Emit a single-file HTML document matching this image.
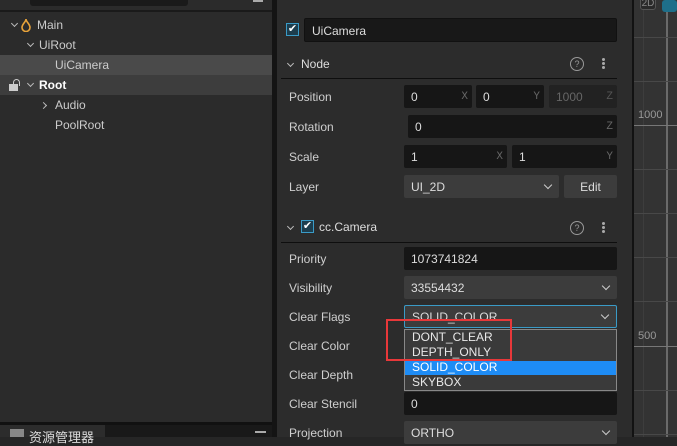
<!DOCTYPE html>
<html><head><meta charset="utf-8"><style>
*{margin:0;padding:0;box-sizing:border-box}
body{width:677px;height:437px;overflow:hidden;background:#262626;font-family:"Liberation Sans","Noto Sans CJK SC",sans-serif;font-size:12px;color:#ccc;position:relative}
.a{position:absolute}
.lbl{position:absolute;left:289px;color:#cfcfcf}
.inp{position:absolute;background:#161616;border-radius:2px;height:23px;line-height:24px;padding-left:7px;color:#ddd}
.sel{position:absolute;background:#3c3c3c;border-radius:2px;height:23px;line-height:24px;padding-left:7px;color:#ddd}
.ax{position:absolute;right:4px;top:0;font-family:"Liberation Mono",monospace;font-size:11px;color:#666}
.chev{position:absolute;right:8px;top:7px;width:6px;height:6px;border-right:1.5px solid #ccc;border-bottom:1.5px solid #ccc;transform:rotate(45deg)}
.tc{position:absolute;width:5px;height:5px;border-right:1.5px solid #bbb;border-bottom:1.5px solid #bbb;transform:rotate(45deg)}
.tr{position:absolute;width:5px;height:5px;border-right:1.5px solid #bbb;border-bottom:1.5px solid #bbb;transform:rotate(-45deg)}
.tree{position:absolute;left:0;width:272px;height:20px;line-height:20px}
.hl{position:absolute;height:1px;background:#111}
.vl{position:absolute;width:1px;background:#3d3d3d}
</style></head><body>
<div class="a" style="left:0;top:0;width:272px;height:422px;background:#2b2b2b"></div>
<div class="a" style="left:0;top:10px;width:272px;height:2px;background:#1a1a1a"></div>
<div class="a" style="left:30px;top:0;width:158px;height:6px;background:#1a1a1a;border-radius:0 0 3px 3px"></div>
<div class="a" style="left:253px;top:0;width:10px;height:2px;background:#aaa"></div>
<div class="tree" style="top:15px"><span class="tc" style="left:12px;top:6px"></span>
<svg class="a" style="left:21px;top:3px" width="10" height="14" viewBox="0 0 10 14"><path d="M5 1 C5 4 1 6 1 9.5 A4 4 0 0 0 9 9.5 C9 6 5 4 5 1Z" fill="none" stroke="#e8a33a" stroke-width="1.6"/></svg>
<span class="a" style="left:37px;color:#ccc">Main</span></div>
<div class="tree" style="top:35px"><span class="tc" style="left:28px;top:6px"></span><span class="a" style="left:39px;color:#ccc">UiRoot</span></div>
<div class="tree" style="top:55px;background:#4a4a4a"><span class="a" style="left:55px;color:#ccc">UiCamera</span></div>
<div class="tree" style="top:75px;background:#3d3d3d"><span class="a" style="left:9px;top:9px;width:9px;height:7px;background:#ccc"></span><span class="a" style="left:13px;top:4px;width:7px;height:7px;border:1.5px solid #ccc;border-bottom:none;border-radius:4px 4px 0 0"></span><span class="tc" style="left:28px;top:6px"></span><span class="a" style="left:39px;color:#fff;font-weight:bold">Root</span></div>
<div class="tree" style="top:95px"><span class="tr" style="left:41px;top:8px"></span><span class="a" style="left:55px;color:#ccc">Audio</span></div>
<div class="tree" style="top:115px"><span class="a" style="left:55px;color:#ccc">PoolRoot</span></div>
<div class="a" style="left:0;top:422px;width:272px;height:3px;background:#111"></div>
<div class="a" style="left:0;top:425px;width:105px;height:12px;background:#2c2c2c"></div>
<div class="a" style="left:105px;top:425px;width:167px;height:12px;background:#191919"></div>
<div class="a" style="left:10px;top:429px;width:14px;height:8px;background:#888"></div>
<div class="a" style="left:29px;top:427px;color:#ddd;font-size:13px">资源管理器</div>
<div class="a" style="left:255px;top:431px;width:11px;height:2px;background:#aaa"></div>
<div class="a" style="left:272px;top:0;width:5px;height:437px;background:#141414"></div>
<div class="a" style="left:277px;top:0;width:355px;height:437px;background:#2c2c2c"></div>
<div class="a" style="left:286px;top:23px;width:13px;height:13px;border:1px solid #3a9bc7;background:#1d3d4d;color:#fff;font-size:11px;line-height:11px;text-align:center">✔</div>
<div class="inp" style="left:304px;top:18px;width:313px;height:24px;line-height:24px;background:#181818;border:1px solid #111">UiCamera</div>
<span class="tc" style="left:288px;top:61px"></span>
<div class="a" style="left:301px;top:57px;color:#ddd">Node</div>
<div class="a" style="left:570px;top:57px;width:14px;height:14px;border:1px solid #999;border-radius:50%;font-size:9px;line-height:12px;text-align:center;color:#999">?</div>
<div class="a" style="left:602px;top:58px;width:3px;height:3px;background:#aaa;border-radius:50%;box-shadow:0 4px 0 #aaa,0 8px 0 #aaa"></div>
<div class="hl" style="left:281px;top:78px;width:336px;background:#0e0e0e"></div>
<div class="lbl" style="top:90px">Position</div>
<div class="inp" style="left:404px;top:85px;width:68px">0<span class="ax">X</span></div>
<div class="inp" style="left:476px;top:85px;width:68px">0<span class="ax">Y</span></div>
<div class="inp" style="left:549px;top:85px;width:68px;background:#222;color:#666">1000<span class="ax" style="color:#555">Z</span></div>
<div class="lbl" style="top:120px">Rotation</div>
<div class="inp" style="left:408px;top:115px;width:209px">0<span class="ax">Z</span></div>
<div class="lbl" style="top:150px">Scale</div>
<div class="inp" style="left:404px;top:145px;width:103px">1<span class="ax">X</span></div>
<div class="inp" style="left:512px;top:145px;width:105px">1<span class="ax">Y</span></div>
<div class="lbl" style="top:180px">Layer</div>
<div class="sel" style="left:404px;top:175px;width:155px">UI_2D<span class="chev"></span></div>
<div class="sel" style="left:564px;top:175px;width:53px;padding:0;text-align:center">Edit</div>
<span class="tc" style="left:288px;top:224px"></span>
<div class="a" style="left:301px;top:220px;width:13px;height:13px;border:1px solid #3a9bc7;background:#1d3d4d;color:#fff;font-size:11px;line-height:11px;text-align:center">✔</div>
<div class="a" style="left:319px;top:220px;color:#ddd">cc.Camera</div>
<div class="a" style="left:570px;top:221px;width:14px;height:14px;border:1px solid #999;border-radius:50%;font-size:9px;line-height:12px;text-align:center;color:#999">?</div>
<div class="a" style="left:602px;top:222px;width:3px;height:3px;background:#aaa;border-radius:50%;box-shadow:0 4px 0 #aaa,0 8px 0 #aaa"></div>
<div class="hl" style="left:281px;top:242px;width:336px;background:#0e0e0e"></div>
<div class="lbl" style="top:252px">Priority</div>
<div class="inp" style="left:404px;top:247px;width:213px">1073741824</div>
<div class="lbl" style="top:281px">Visibility</div>
<div class="sel" style="left:404px;top:276px;width:213px">33554432<span class="chev"></span></div>
<div class="lbl" style="top:310px">Clear Flags</div>
<div class="sel" style="left:404px;top:305px;width:213px;border:1px solid #3a9bc7;line-height:22px">SOLID_COLOR<span class="chev" style="top:6px"></span></div>
<div class="lbl" style="top:339px">Clear Color</div>
<div class="lbl" style="top:368px">Clear Depth</div>
<div class="lbl" style="top:397px">Clear Stencil</div>
<div class="inp" style="left:404px;top:392px;width:213px">0</div>
<div class="lbl" style="top:426px">Projection</div>
<div class="sel" style="left:404px;top:421px;width:213px">ORTHO<span class="chev"></span></div>
<div class="a" style="left:404px;top:329px;width:213px;height:62px;background:#3a3a3a;border:1px solid #888"></div>
<div class="a" style="left:412px;top:330px;color:#e8e8e8">DONT_CLEAR</div>
<div class="a" style="left:412px;top:345px;color:#e8e8e8">DEPTH_ONLY</div>
<div class="a" style="left:405px;top:361px;width:211px;height:14px;background:#1e8cf5"></div>
<div class="a" style="left:412px;top:360px;color:#fff">SOLID_COLOR</div>
<div class="a" style="left:412px;top:375px;color:#e8e8e8">SKYBOX</div>
<div class="a" style="left:386px;top:319px;width:126px;height:42px;border:2px solid #e8383a"></div>
<div class="a" style="left:632px;top:0;width:2px;height:437px;background:#121212"></div>
<div class="a" style="left:634px;top:0;width:43px;height:437px;background:#333"></div>
<div class="vl" style="left:643px;top:10px;height:427px"></div>
<div class="vl" style="left:666px;top:10px;height:427px;width:2px;background:#6a6a6a"></div>
<div class="a" style="left:634px;top:125px;width:43px;height:1px;background:#777"></div>
<div class="a" style="left:634px;top:346px;width:43px;height:1px;background:#777"></div>
<div class="a" style="left:638px;top:109px;color:#999;font-size:11px">1000</div>
<div class="a" style="left:638px;top:330px;color:#999;font-size:11px">500</div>
<div class="a" style="left:640px;top:-3px;width:16px;height:13px;border:1px solid #555;border-radius:3px;font-size:10px;color:#888;text-align:center;background:#2a2a2a">2D</div>
<div class="a" style="left:662px;top:0;width:15px;height:12px;background:#1e6f8a;border-radius:3px"></div>
<div class="a" style="left:634px;top:37px;width:43px;height:1px;background:#484848"></div>
<div class="a" style="left:634px;top:81px;width:43px;height:1px;background:#484848"></div>
<div class="a" style="left:634px;top:169px;width:43px;height:1px;background:#484848"></div>
<div class="a" style="left:634px;top:213px;width:43px;height:1px;background:#484848"></div>
<div class="a" style="left:634px;top:257px;width:43px;height:1px;background:#484848"></div>
<div class="a" style="left:634px;top:301px;width:43px;height:1px;background:#484848"></div>
<div class="a" style="left:634px;top:390px;width:43px;height:1px;background:#484848"></div>
<div class="a" style="left:634px;top:434px;width:43px;height:1px;background:#484848"></div>
</body></html>
